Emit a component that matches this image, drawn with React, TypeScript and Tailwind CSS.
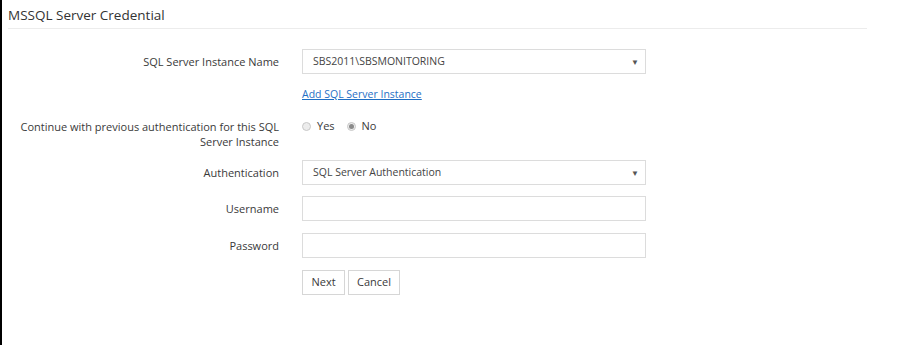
import React from "react";

const font = { fontFamily: '"Open Sans", "Liberation Sans", sans-serif' };

const Radio: React.FC<{ checked?: boolean; label: string }> = ({ checked, label }) => (
  <label className="flex items-center gap-[6px] mr-[12px]">
    <span className="w-[9px] h-[9px] rounded-full border border-[#c8c8c8] bg-[#ececec] flex items-center justify-center">
      {checked && <span className="w-[5px] h-[5px] rounded-full bg-[#8a8a8a]" />}
    </span>
    <span className="text-[11px] text-[#3a3a3a]">{label}</span>
  </label>
);

const Select: React.FC<{ value: string }> = ({ value }) => (
  <div className="w-[344px] h-[25px] border border-[#dcdcdc] bg-white flex items-center justify-between pl-[10px] pr-[6px]">
    <span className="text-[10.5px] text-[#444]">{value}</span>
    <span className="text-[8px] text-[#555]">▼</span>
  </div>
);

const Row: React.FC<{ label: React.ReactNode; children: React.ReactNode; className?: string }> = ({
  label,
  children,
  className,
}) => (
  <div className={`flex ${className ?? "items-center"}`}>
    <div className="w-[260px] ml-[17px] text-right text-[11px] leading-[15px] text-[#3a3a3a]">{label}</div>
    <div className="ml-[23px]">{children}</div>
  </div>
);

export default function App() {
  return (
    <div className="w-[899px] h-[345px] bg-white border-l-2 border-black" style={font}>
      <div className="pl-[6px] pr-[32px]">
        <div className="h-[29px] border-b border-[#ececec] flex items-center pt-[2px]">
          <span className="text-[13.5px] text-[#333]">MSSQL Server Credential</span>
        </div>
      </div>

      <div className="pt-[20px]">
        <Row label="SQL Server Instance Name" className="items-center">
          <Select value="SBS2011\SBSMONITORING" />
        </Row>

        <div className="ml-[300px] mt-[6px]">
          <a href="#" className="text-[10.5px] text-[#1f6fc5] underline">
            Add SQL Server Instance
          </a>
        </div>

        <Row label="Continue with previous authentication for this SQL Server Instance" className="items-start mt-[15px]">
          <div className="flex items-center h-[15px]">
            <Radio label="Yes" />
            <Radio label="No" checked />
          </div>
        </Row>

        <Row label="Authentication" className="items-center mt-[11px]">
          <Select value="SQL Server Authentication" />
        </Row>

        <Row label="Username" className="items-center mt-[11px]">
          <div className="w-[344px] h-[25px] border border-[#dcdcdc]" />
        </Row>

        <Row label="Password" className="items-center mt-[12px]">
          <div className="w-[344px] h-[25px] border border-[#dcdcdc]" />
        </Row>

        <div className="ml-[300px] mt-[12px] flex gap-[3px]">
          <button className="h-[25px] w-[43px] border border-[#d6d6d6] bg-white text-[11px] text-[#3a3a3a]">
            Next
          </button>
          <button className="h-[25px] w-[52px] border border-[#d6d6d6] bg-white text-[11px] text-[#3a3a3a]">
            Cancel
          </button>
        </div>
      </div>
    </div>
  );
}
